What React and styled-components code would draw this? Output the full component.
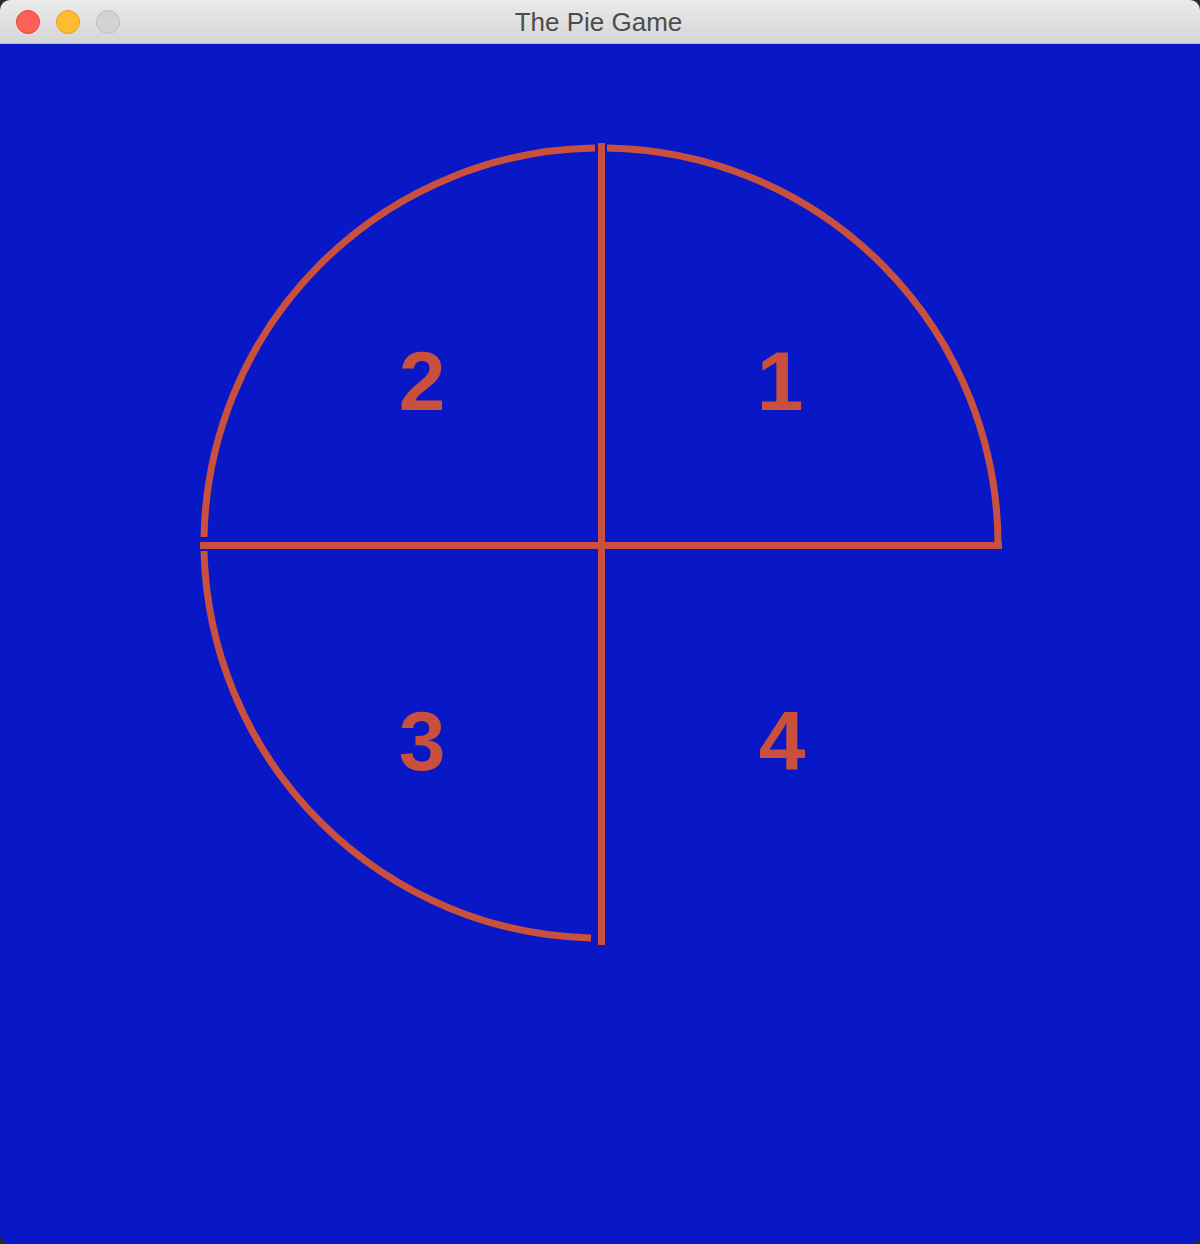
import styled, { createGlobalStyle } from 'styled-components';

const GlobalStyle = createGlobalStyle`
    html, body {
        margin: 0;
        padding: 0;
        background: #2b2b2b;
    }
    #root {
        height: 1244px;
    }
`

const PIE_RED = '#c8503c';

const lights = [
    { fill: '#fe5f57', ring: '#e2463f' },
    { fill: '#febc2e', ring: '#e0a126' },
    { fill: '#d3d3d3', ring: '#bdbdbd' },
];

const labels = [
    { text: '1', x: 780, y: 366 },
    { text: '2', x: 422, y: 366 },
    { text: '3', x: 422, y: 726 },
    { text: '4', x: 782, y: 726 },
];

const cx = 601;
const cy = 501;
const r = 397;

const App = () => {
    return (
        <>
            <GlobalStyle />
            <Window>
                <TitleBar>
                    <Lights>
                        {lights.map((l, i) => (
                            <Light key={i} $fill={l.fill} $ring={l.ring} />
                        ))}
                    </Lights>
                    <Title>The Pie Game</Title>
                </TitleBar>
                <Canvas>
                    <svg width="1200" height="1200" viewBox="0 0 1200 1200">
                        <g fill="none" stroke={PIE_RED} strokeWidth="7">
                            {/* quarter 1: top to right */}
                            <path d={`M ${cx + 6} ${cy - r} A ${r} ${r} 0 0 1 ${cx + r} ${cy - 2}`} />
                            {/* quarter 2: left to top */}
                            <path d={`M ${cx - r} ${cy - 8} A ${r} ${r} 0 0 1 ${cx - 6} ${cy - r}`} />
                            {/* quarter 3: left to bottom */}
                            <path d={`M ${cx - r} ${cy + 6} A ${r} ${r} 0 0 0 ${cx - 10} ${cy + r - 4}`} />
                            <line x1={cx + 0.5} y1="99" x2={cx + 0.5} y2="901" />
                            <line x1="200" y1={cy + 0.5} x2="1002" y2={cy + 0.5} />
                        </g>
                        {labels.map((l) => (
                            <PieLabel key={l.text} x={l.x} y={l.y} textAnchor="middle">
                                {l.text}
                            </PieLabel>
                        ))}
                    </svg>
                </Canvas>
            </Window>
        </>
    )
}

export default App;

const Window = styled.div`
    width: 1200px;
    height: 1244px;
    display: flex;
    flex-direction: column;
    border-radius: 10px;
    overflow: hidden;
`

const TitleBar = styled.div`
    position: relative;
    height: 43px;
    flex-shrink: 0;
    display: flex;
    align-items: center;
    justify-content: center;
    background: linear-gradient(#ebebeb, #d5d5d5);
    border-bottom: 1px solid #b9b9b9;
`

const Lights = styled.div`
    position: absolute;
    left: 16px;
    top: 10px;
    display: flex;
    gap: 16px;
`

const Light = styled.span`
    width: 22px;
    height: 22px;
    border-radius: 50%;
    background: ${p => p.$fill};
    border: 1px solid ${p => p.$ring};
`

const Title = styled.div`
    font-family: "Liberation Sans", Arial, sans-serif;
    font-size: 26px;
    color: #4c4c4c;
    margin-left: -3px;
    margin-top: 2px;
`

const Canvas = styled.div`
    flex: 1;
    background: #0918c6;
    overflow: hidden;

    svg {
        display: block;
    }
`

const PieLabel = styled.text`
    font-family: "Liberation Sans", Arial, sans-serif;
    font-weight: bold;
    font-size: 84px;
    fill: ${PIE_RED};
`
